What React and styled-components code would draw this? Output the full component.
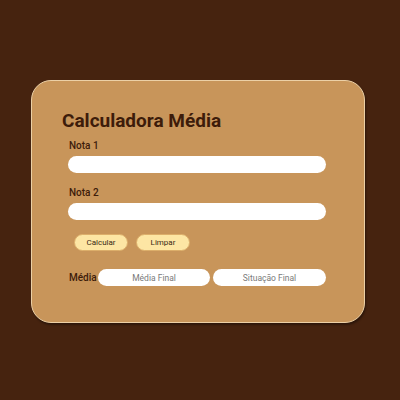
import React from "react";
import styled, { createGlobalStyle } from "styled-components";

const Global = createGlobalStyle`
  html, body { margin: 0; padding: 0; }
  body {
    background: #46230f;
    font-family: Roboto, "Liberation Sans", sans-serif;
    width: 400px;
    height: 400px;
    overflow: hidden;
  }
  * { box-sizing: border-box; }
`;

const Page = styled.div`
  padding: 80px 0 0 31px;
`;

const Card = styled.div`
  width: 334px;
  height: 243px;
  background: #c8955a;
  border: 1px solid #ecd0a6;
  border-radius: 20px;
  box-shadow: 1px 2px 2px rgba(0, 0, 0, 0.35);
  padding: 29px 38px 0 30px;
  display: flex;
  flex-direction: column;
`;

const Title = styled.h1`
  margin: 0;
  font-size: 19px;
  line-height: 22px;
  font-weight: 700;
  color: #3d1c0a;
`;

const Form = styled.div`
  display: flex;
  flex-direction: column;
  padding-left: 6px;
  margin-top: 8px;
`;

const Label = styled.label`
  font-size: 10px;
  line-height: 12px;
  font-weight: 500;
  color: #3d1c0a;
  padding-left: 1px;
  margin-top: ${(p) => p.$top || 0}px;
`;

const Input = styled.input`
  display: block;
  width: ${(p) => (p.$w ? `${p.$w}px` : "100%")};
  flex: none;
  height: 17px;
  margin-top: ${(p) => p.$top || 0}px;
  border: none;
  outline: none;
  border-radius: 9px;
  background: #ffffff;
  font-family: inherit;
  font-size: 8.5px;
  color: #333;
  text-align: ${(p) => (p.$center ? "center" : "left")};
  padding: 0 8px;
  &::placeholder { color: #7a7a7a; }
`;

const Buttons = styled.div`
  display: flex;
  gap: 8px;
  margin-top: 14px;
  padding-left: 6px;
`;

const Button = styled.button`
  width: 54px;
  height: 17px;
  border: 1px solid #dcae6a;
  border-radius: 9px;
  background: #fde6a4;
  color: #3a2a14;
  font-family: inherit;
  font-size: 8px;
  padding: 0;
  cursor: pointer;
`;

const ResultRow = styled.div`
  display: flex;
  align-items: center;
  gap: 3px;
  margin-top: 18px;
`;

const ResultLabel = styled.span`
  font-size: 10px;
  font-weight: 500;
  color: #3d1c0a;
  flex: none;
  width: 27px;
  padding-left: 1px;
  white-space: nowrap;
`;

export default function App() {
  return (
    <>
      <Global />
      <Page>
        <Card>
          <Title>Calculadora Média</Title>
          <Form>
            <Label>Nota 1</Label>
            <Input $top={4} />
            <Label $top={14}>Nota 2</Label>
            <Input $top={4} />
            <Buttons>
              <Button>Calcular</Button>
              <Button>Limpar</Button>
            </Buttons>
            <ResultRow>
              <ResultLabel>Média</ResultLabel>
              <Input $w={112} $center placeholder="Média Final" readOnly />
              <Input $w={113} $center placeholder="Situação Final" readOnly />
            </ResultRow>
          </Form>
        </Card>
      </Page>
    </>
  );
}
